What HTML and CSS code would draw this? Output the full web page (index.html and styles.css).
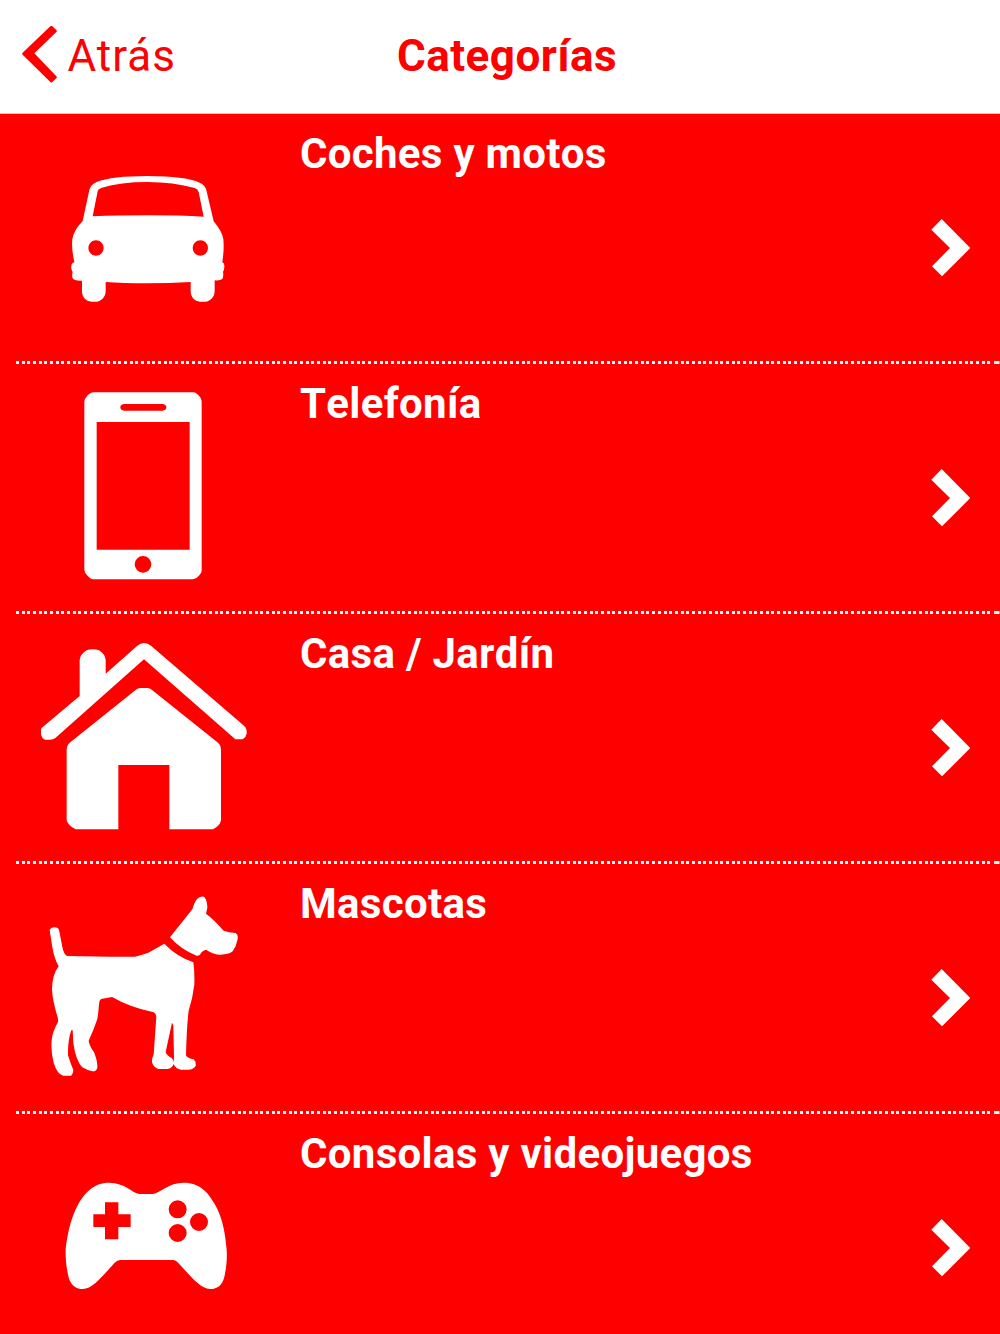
FILE: index.html
```html
<!DOCTYPE html>
<html lang="es">
<head>
<meta charset="utf-8">
<title>Categorías</title>
<link rel="stylesheet" href="styles.css">
</head>
<body>
<header class="navbar">
  <a class="back">
    <svg class="back-icon" width="36" height="60" viewBox="0 0 108 180"><path d="M88 10Q91 7 94 10L106 21Q109 24 106 27L40 91L106 160Q109 163 106 166L94 177Q91 180 88 177L5 95Q2 92 5 89Z"/></svg>
    <span class="back-label">Atrás</span>
  </a>
  <h1 class="title">Categorías</h1>
</header>
<main class="list">
  <section class="row">
    <div class="icon-cell">
      <svg class="icon car" width="200" height="160" viewBox="0 0 600 480"><path fill-rule="evenodd" d="M98 183L118 90Q122 74 140 66Q185 48 293 48Q405 48 449 68Q465 75 469 90L491 184Q517 215 520 238Q523 265 517 307Q524 310 523 320Q523 330 519 335Q521 346 518 355Q515 362 494 361V393C494 411 480 425 466 425H450C434 425 422 411 422 394V366Q360 370 290 370Q220 370 167 366V393C167 411 153 425 139 425H124C108 425 96 411 96 394V362Q72 363 68 355Q65 346 68 335Q62 328 64 318Q64 310 73 307Q64 265 67 238Q70 212 98 183ZM128 169Q205 166 293 166Q390 166 461 170L446 96Q444 87 434 84Q370 66 293 66Q210 66 156 83Q144 87 143 94ZM161 264A23 23 0 1 0 115 264A23 23 0 1 0 161 264ZM474 264A23 23 0 1 0 428 264A23 23 0 1 0 474 264Z"/></svg>
    </div>
    <h2 class="name">Coches y motos</h2>
    <svg class="chevron" width="40" height="60" viewBox="0 0 120 180"><path d="M35 6L121 93L36 178L6 148L60 93L4 38Z"/></svg>
  </section>
  <div class="divider"></div>
  <section class="row">
    <div class="icon-cell">
      <svg class="icon phone" width="150" height="210" viewBox="0 0 450 630"><path fill-rule="evenodd" d="M70 37H369Q377 37 384 44Q395 54 395 66V572Q395 580 386 588Q378 598 369 598H70Q62 598 54 589Q43 579 43 569V66Q43 56 53 46Q62 37 70 37ZM80 126V509H359V126ZM161 72Q151 74 151 82Q151 90 161 92H279Q289 90 289 82Q289 74 279 72ZM244 553A25 25 0 1 0 194 553A25 25 0 1 0 244 553Z"/></svg>
    </div>
    <h2 class="name">Telefonía</h2>
    <svg class="chevron" width="40" height="60" viewBox="0 0 120 180"><path d="M35 6L121 93L36 178L6 148L60 93L4 38Z"/></svg>
  </section>
  <div class="divider"></div>
  <section class="row">
    <div class="icon-cell">
      <svg class="icon house" width="230" height="210" viewBox="0 0 690 630"><path d="M149 198V90Q151 72 170 61Q178 58 188 58Q199 58 207 61Q225 72 227 90V131L322 47Q331 39 342 39Q354 39 363 47L642 287Q650 294 650 302V311Q648 322 638 328H616L342 88L76 324Q70 329 60 329H45Q35 324 33 314V298Q34 293 41 289ZM119 338L314 182Q322 174 330 174H353Q361 174 369 182L564 338Q573 346 573 360V571Q570 588 549 598H418V405H265V598H137Q115 588 110 571V360Q110 346 119 338Z"/></svg>
    </div>
    <h2 class="name">Casa / Jardín</h2>
    <svg class="chevron" width="40" height="60" viewBox="0 0 120 180"><path d="M35 6L121 93L36 178L6 148L60 93L4 38Z"/></svg>
  </section>
  <div class="divider"></div>
  <section class="row">
    <div class="icon-cell">
      <svg class="icon dog" width="220" height="200" viewBox="0 0 660 600"><path d="M420 157L487 73Q493 52 501 42Q512 31 523 36Q532 46 532 68L528 86Q549 101 581 137Q595 143 617 144Q625 149 623 162Q619 184 608 199Q596 209 572 209Q551 209 528 194Q515 198 512 206Q507 214 500 212Q455 196 420 157ZM403 176Q438 213 490 232Q494 258 493 299Q488 340 476 377Q470 425 468 511Q472 520 491 523Q499 531 497 543Q490 554 475 554H453Q437 552 431 537Q426 551 412 552H385Q371 548 366 532Q365 521 371 508L379 395Q378 385 371 382Q300 367 246 336L213 342Q207 346 207 358Q205 385 202 402Q191 435 176 467Q177 480 192 502Q203 529 202 548Q199 560 187 559Q170 555 157 547Q138 529 130 475Q129 450 128 437Q127 432 124 436Q113 465 114 511Q122 537 130 555Q129 568 123 572H99Q81 566 71 533Q62 500 65 466Q67 441 84 411Q85 405 83 397Q68 350 66 313Q66 270 86 244Q73 222 67 187L59 135Q62 128 72 127Q84 126 87 135L97 185Q101 208 112 213L240 215H315Q335 210 355 203Q378 190 403 176ZM426 413L407 501Q410 512 425 519Q432 526 431 535L432 515L430 422Q427 413 426 413Z" fill-rule="evenodd"/></svg>
    </div>
    <h2 class="name">Mascotas</h2>
    <svg class="chevron" width="40" height="60" viewBox="0 0 120 180"><path d="M35 6L121 93L36 178L6 148L60 93L4 38Z"/></svg>
  </section>
  <div class="divider"></div>
  <section class="row">
    <div class="icon-cell">
      <svg class="icon gamepad" width="200" height="160" viewBox="0 0 600 480"><path fill-rule="evenodd" d="M178 38C224 38 247 69 268 72H309C331 68 356 38 401 38C450 38 475 68 494 102C515 138 525 180 530 240C533 277 523 329 519 332C511 351 496 357 480 357C450 356 418 314 385 279Q379 271 370 270H210Q202 270 194 278C160 314 130 357 98 357C79 357 67 348 58 329C49 300 46 260 47 236C54 180 65 140 84 104C104 69 130 38 178 38ZM165 97V133H130V171H165V208H205V171H242V133H205V97ZM410 118A27 27 0 1 0 356 118A27 27 0 1 0 410 118ZM474 156A27 27 0 1 0 420 156A27 27 0 1 0 474 156ZM410 189A27 27 0 1 0 356 189A27 27 0 1 0 410 189Z"/></svg>
    </div>
    <h2 class="name">Consolas y videojuegos</h2>
    <svg class="chevron" width="40" height="60" viewBox="0 0 120 180"><path d="M35 6L121 93L36 178L6 148L60 93L4 38Z"/></svg>
  </section>
</main>
</body>
</html>
```
FILE: styles.css
```css
* {
  box-sizing: border-box;
}

body {
  margin: 0;
  height: 1334px;
  overflow: hidden;
  background: #ff0000;
  font-family: Roboto, "Liberation Sans", sans-serif;
}

svg {
  display: block;
  fill: currentColor;
}

.navbar {
  display: grid;
  grid-template-columns: 377px 260px 1fr;
  align-items: start;
  height: 114px;
  background: #fff;
  border-bottom: 1px solid #ffb0b0;
  color: #ff0000;
}

.back {
  display: flex;
  padding: 23px 0 0 20.5px;
}

.back-label {
  margin: 8px 0 0 11px;
  font-size: 44px;
  line-height: 50px;
  letter-spacing: 1px;
}

.title {
  margin: 31px 0 0;
  font-size: 44px;
  font-weight: 700;
  line-height: 50px;
  letter-spacing: 0.5px;
  text-align: center;
}

.list {
  height: 1220px;
  overflow: hidden;
  color: #fff;
}

.row {
  display: grid;
  grid-template-columns: 300px 1fr 70px;
  height: 247px;
  overflow: hidden;
}

.name {
  margin: 15px 0 0;
  font-size: 42px;
  font-weight: 700;
  line-height: 50px;
  letter-spacing: 0.3px;
  font-kerning: none;
  white-space: nowrap;
}

.chevron {
  margin-top: 103px;
}

.divider {
  height: 3px;
  margin-left: 15.8px;
  background:
    linear-gradient(#fff, #fff) right 1px top / 5.5px 3px no-repeat,
    linear-gradient(#f00, #f00) right top / 10px 3px no-repeat,
    repeating-linear-gradient(90deg, #fff 0 3px, transparent 3px 5.68px);
}

.car {
  margin: 46px 0 0 50px;
}

.phone {
  margin: 16px 0 0 70px;
}

.house {
  margin: 16px 0 0 30px;
}

.dog {
  margin: 21px 0 0 30px;
}

.gamepad {
  margin: 56px 0 0 50px;
}
```
